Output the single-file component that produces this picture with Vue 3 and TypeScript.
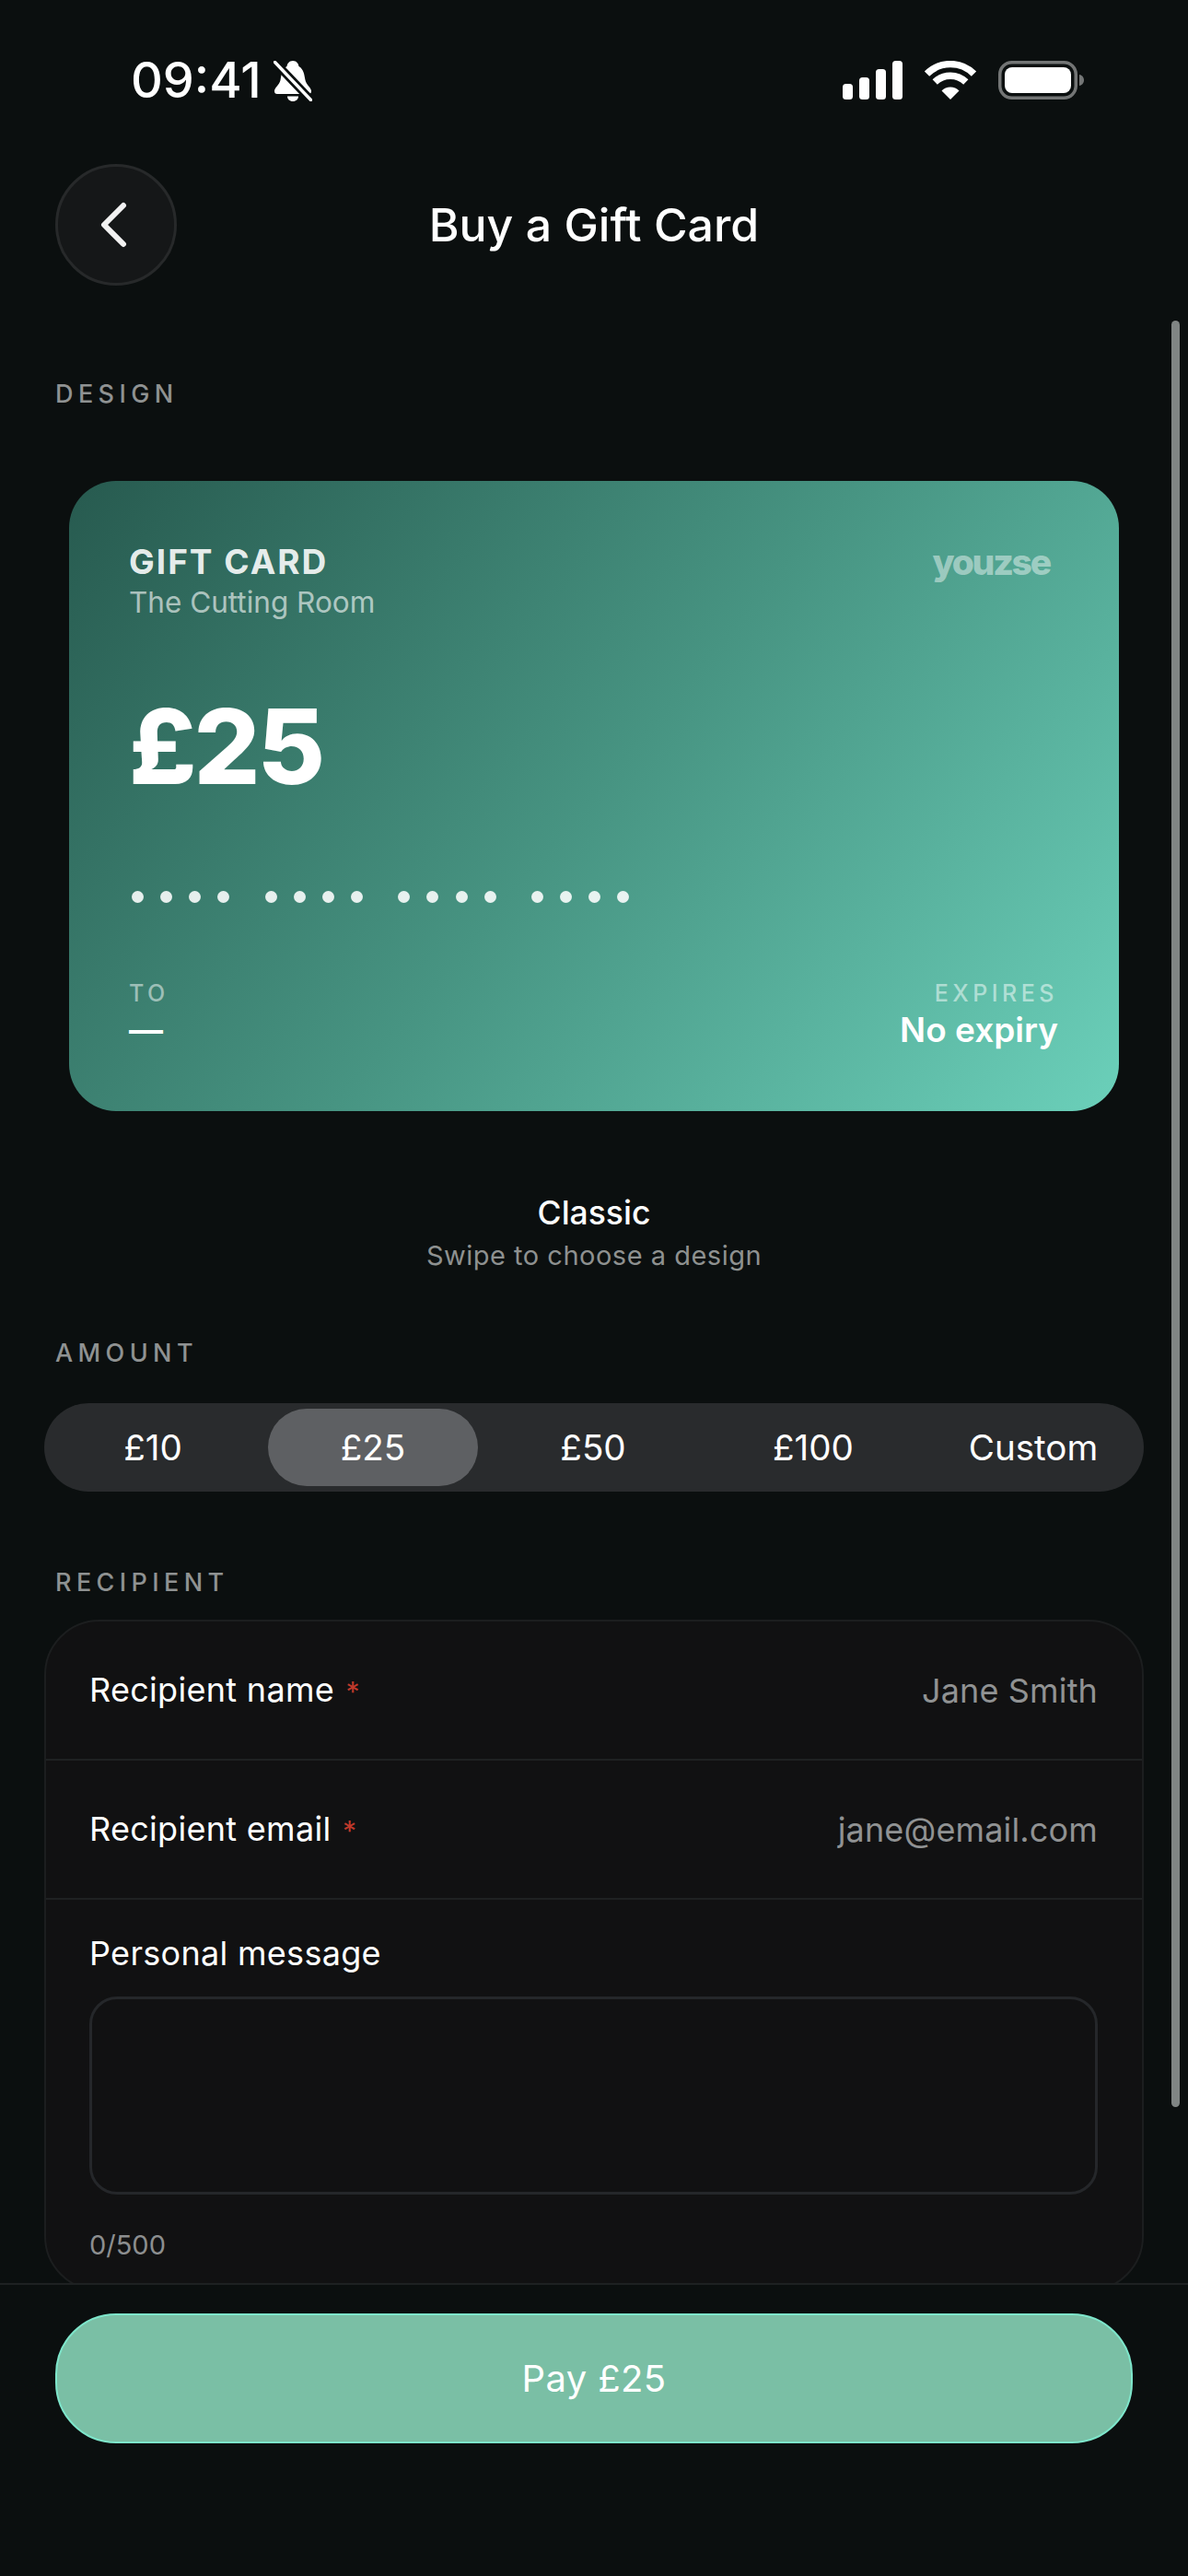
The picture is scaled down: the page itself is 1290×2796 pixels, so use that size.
<script setup lang="ts">
const amounts: string[] = ['£10', '£25', '£50', '£100', 'Custom']
const groups: number[] = [0, 1, 2, 3]
const dots: number[] = [0, 1, 2, 3]
</script>

<template>
  <div class="screen">
    <div class="status">
      <div class="status-left">
        <span class="time">09:41</span>
        <svg class="bell" width="42" height="44" viewBox="0 0 42 44">
          <path fill="#fff" d="M21 0C25 0 27 3 27.5 6C33 9 33.5 16 34.5 21C35.5 26 41 29 41 33C41 35 40 36 38 36H4C2 36 1 35 1 33C1 29 6.5 26 7.5 21C8.5 16 9 9 14.5 6C15 3 17 0 21 0Z" />
          <path fill="#fff" d="M15 38.5H27C27 41.5 24.5 44 21 44C17.5 44 15 41.5 15 38.5Z" />
          <path d="M1 1L41 43" stroke="#0b0f0f" stroke-width="9" />
          <path d="M1.5 1.5L40.5 42.5" stroke="#fff" stroke-width="3.4" stroke-linecap="round" />
        </svg>
      </div>
      <div class="status-right">
        <svg width="65" height="42" viewBox="0 0 65 42">
          <rect x="0" y="25" width="11" height="17" rx="3.5" fill="#fff" />
          <rect x="18" y="18" width="11" height="24" rx="3.5" fill="#fff" />
          <rect x="36" y="9" width="11" height="33" rx="3.5" fill="#fff" />
          <rect x="54" y="0" width="11" height="42" rx="3.5" fill="#fff" />
        </svg>
        <svg class="wifi" width="58" height="42" viewBox="0 0 58 42">
          <path d="M3.5 14.2A36 36 0 0 1 54.5 14.2" fill="none" stroke="#fff" stroke-width="7.5" />
          <path d="M12.2 23A24 24 0 0 1 45.8 23" fill="none" stroke="#fff" stroke-width="7.5" />
          <path d="M29 42L19.5 32.5A13.4 13.4 0 0 1 38.5 32.5Z" fill="#fff" />
        </svg>
        <svg class="battery" width="93" height="42" viewBox="0 0 93 42">
          <rect x="1.75" y="1.75" width="82.5" height="38.5" rx="13" fill="none" stroke="#737575" stroke-width="3.5" />
          <rect x="7" y="7" width="72" height="28" rx="8" fill="#fff" />
          <path d="M88 15C91 15.5 93 18 93 21C93 24 91 26.5 88 27Z" fill="#737575" />
        </svg>
      </div>
    </div>

    <header class="header">
      <button class="back" type="button">
        <svg width="36" height="52" viewBox="0 0 36 52">
          <path d="M29 5L8 26L29 47" fill="none" stroke="#f2f2f2" stroke-width="6" stroke-linecap="round" stroke-linejoin="round" />
        </svg>
      </button>
      <h1 class="title">Buy a Gift Card</h1>
    </header>

    <main class="main">
      <div class="label label-design">DESIGN</div>

      <section class="card">
        <div class="card-top">
          <div>
            <div class="card-kicker">GIFT CARD</div>
            <div class="card-venue">The Cutting Room</div>
          </div>
          <div class="brand">youzse</div>
        </div>
        <div class="card-amount">£25</div>
        <div class="card-dots">
          <div v-for="g in groups" :key="g" class="dot-group">
            <i v-for="d in dots" :key="d" class="dot"></i>
          </div>
        </div>
        <div class="card-bottom">
          <div>
            <div class="card-small">TO</div>
            <div class="card-value">—</div>
          </div>
          <div class="align-right">
            <div class="card-small">EXPIRES</div>
            <div class="card-value">No expiry</div>
          </div>
        </div>
      </section>

      <div class="design-name">Classic</div>
      <div class="design-hint">Swipe to choose a design</div>

      <div class="label label-amount">AMOUNT</div>
      <div class="segment">
        <div v-for="a in amounts" :key="a" class="seg-item" :class="{ active: a === '£25' }">{{ a }}</div>
      </div>

      <div class="label label-recipient">RECIPIENT</div>
      <section class="form">
        <div class="row">
          <span class="row-label">Recipient name <em>*</em></span>
          <span class="row-value">Jane Smith</span>
        </div>
        <div class="row">
          <span class="row-label">Recipient email <em>*</em></span>
          <span class="row-value">jane@email.com</span>
        </div>
        <div class="message">
          <div class="row-label">Personal message</div>
          <div class="textarea"></div>
          <div class="count">0/500</div>
        </div>
      </section>
    </main>

    <div class="scrollbar"></div>

    <footer class="footer">
      <button class="pay" type="button">Pay £25</button>
    </footer>
  </div>
</template>

<style>
html, body { margin: 0; background: #0b0f0f; }
</style>

<style scoped>
.screen {
  position: relative;
  width: 1290px;
  height: 2796px;
  overflow: hidden;
  display: flex;
  flex-direction: column;
  background: #0b0f0f;
  color: #fff;
  font-family: Inter, "Noto Sans", sans-serif;
}
.status {
  height: 178px;
  flex: none;
  box-sizing: border-box;
  padding: 65px 113px 0 142px;
  display: flex;
  justify-content: space-between;
  align-items: flex-start;
}
.status-left { display: flex; align-items: flex-start; gap: 13px; }
.time { font-size: 54px; line-height: 44px; font-weight: 500; }
.bell { display: block; margin-top: 1px; }
.status-right { display: flex; align-items: flex-start; margin-top: 1px; }
.status-right svg { display: block; }
.wifi { margin-left: 23px; }
.battery { margin-left: 23px; }

.header {
  height: 132px;
  flex: none;
  box-sizing: border-box;
  padding: 0 60px;
  display: grid;
  grid-template-columns: 132px 1fr 132px;
  align-items: center;
}
.back {
  width: 132px;
  height: 132px;
  box-sizing: border-box;
  padding: 0;
  border-radius: 50%;
  border: 3px solid #27292a;
  background: #151718;
  display: flex;
  align-items: center;
  justify-content: center;
}
.back svg { display: block; margin-right: 6px; }
.title {
  margin: 0;
  grid-column: 2;
  text-align: center;
  font-size: 50px;
  line-height: 60px;
  font-weight: 500;
}

.main { flex: 1; min-height: 0; overflow: hidden; }
.label {
  margin-left: 60px;
  font-size: 27px;
  line-height: 27px;
  font-weight: 500;
  letter-spacing: 5.4px;
  color: #8f9292;
}
.label-design { margin-top: 104px; }
.label-amount { margin-top: 74px; }
.label-recipient { margin-top: 85px; }

.card {
  margin: 81px 75px 0;
  height: 684px;
  box-sizing: border-box;
  padding: 66px 66px 0 65px;
  border-radius: 51px;
  background: linear-gradient(130deg, #275a4f 0%, #479482 50%, #6bd0ba 100%);
  display: flex;
  flex-direction: column;
}
.card-top { display: flex; justify-content: space-between; align-items: flex-start; }
.card-kicker {
  font-size: 37px;
  line-height: 44px;
  font-weight: 700;
  letter-spacing: 2px;
  color: rgba(255, 255, 255, 0.9);
}
.card-venue {
  font-size: 31.5px;
  line-height: 40px;
  color: rgba(255, 255, 255, 0.62);
  margin-top: 2px;
}
.brand {
  font-size: 39px;
  line-height: 44px;
  font-weight: 800;
  color: rgba(255, 255, 255, 0.45);
  margin-right: 9px;
  letter-spacing: -2.2px;
}
.card-amount {
  margin-top: 72px;
  font-size: 113px;
  line-height: 128px;
  font-weight: 800;
  letter-spacing: -3px;
}
.card-dots { display: flex; gap: 38.4px; margin-top: 93px; margin-left: 3px; }
.dot-group { display: flex; gap: 18.1px; }
.dot { display: block; width: 13px; height: 13px; border-radius: 50%; background: rgba(255, 255, 255, 0.88); }
.card-bottom {
  margin-top: 81px;
  display: flex;
  justify-content: space-between;
  align-items: flex-start;
}
.align-right { text-align: right; }
.card-small {
  font-size: 25px;
  line-height: 35px;
  font-weight: 500;
  letter-spacing: 4.5px;
  color: rgba(255, 255, 255, 0.5);
}
.card-value {
  font-size: 37px;
  line-height: 44px;
  font-weight: 600;
}

.design-name {
  margin-top: 91px;
  text-align: center;
  font-size: 35.5px;
  line-height: 40px;
  font-weight: 500;
}
.design-hint {
  margin-top: 8px;
  text-align: center;
  font-size: 29px;
  line-height: 36px;
  letter-spacing: 0.5px;
  color: #8e9190;
}

.segment {
  margin: 41px 48px 0;
  height: 96px;
  box-sizing: border-box;
  padding: 6px 6px 6px 4px;
  border-radius: 48px;
  background: #292b2d;
  display: flex;
  gap: 11px;
}
.seg-item {
  width: 228px;
  flex: none;
  display: flex;
  align-items: center;
  justify-content: center;
  font-size: 38.6px;
  border-radius: 42px;
}
.seg-item.active { background: #5e6063; }

.form {
  margin: 27px 48px 0;
  box-sizing: border-box;
  border: 2px solid #1c1e1f;
  border-radius: 60px;
  background: #111112;
}
.row {
  height: 151px;
  box-sizing: border-box;
  padding: 0 48px 0 47px;
  display: flex;
  align-items: center;
  justify-content: space-between;
  border-bottom: 2px solid #1f2122;
}
.row-label { font-size: 36px; line-height: 44px; letter-spacing: 0.3px; }
.row-label em {
  font-style: normal;
  font-size: 30px;
  color: #c0392b;
  margin-left: 2px;
}
.row-value { font-size: 36px; line-height: 44px; color: #909293; letter-spacing: 0.15px; }
.message { padding: 36px 48px 30px 47px; }
.textarea {
  margin-top: 25px;
  height: 215px;
  box-sizing: border-box;
  border: 3px solid #25272a;
  border-radius: 30px;
  background: #111112;
}
.count {
  margin-top: 37px;
  font-size: 29px;
  line-height: 36px;
  color: #8c8e8f;
}

.scrollbar {
  position: absolute;
  left: 1272px;
  top: 348px;
  width: 9px;
  height: 1939px;
  border-radius: 5px;
  background: #808584;
}

.footer {
  height: 318px;
  flex: none;
  box-sizing: border-box;
  border-top: 2px solid #1e2122;
  padding: 31px 60px 0;
  background: #0b0f0f;
}
.pay {
  display: block;
  width: 1170px;
  height: 141px;
  box-sizing: border-box;
  padding: 0;
  border: 2.5px solid #7ee6cb;
  border-radius: 66px;
  background: #7abfa5;
  color: #fff;
  font-family: inherit;
  font-size: 40px;
  letter-spacing: 0.4px;
}
</style>
